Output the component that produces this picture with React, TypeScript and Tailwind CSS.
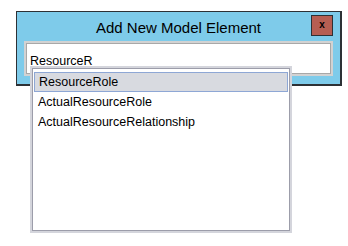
const items = ["ResourceRole", "ActualResourceRole", "ActualResourceRelationship"];

export default function App() {
  return (
    <div className="relative h-[246px] w-[348px] bg-white pl-[16px] pt-[11px] font-['Liberation_Sans',Arial,sans-serif] text-black">
      <div className="h-[75px] w-[326px] border border-r-2 border-b-2 border-[#2d3135] bg-[#7ecbea]">
        <div className="relative flex h-[29px] items-center justify-center pt-[1px]">
          <span className="text-[15px] leading-none">Add New Model Element</span>
          <button className="absolute right-[7px] top-[3px] flex h-[21px] w-[22px] items-center justify-center border border-[#2d3135] bg-[#b65e52] pb-[2px] text-[10px] font-bold leading-none">
            x
          </button>
        </div>
        <div className="ml-[7px] h-[35px] w-[309px] border-2 border-[#d2d2d2] bg-white">
          <div className="flex h-full items-end border border-[#a8a8a8] pb-[6px] pl-[3px]">
            <span className="text-[12.5px] leading-none">ResourceR</span>
          </div>
        </div>
      </div>

      <div className="absolute left-[30px] top-[66px] h-[167px] w-[262px] border-2 border-[#d4d5dc] bg-white">
        <div className="h-full border border-[#9c9daa] px-[1px] pt-[3px]">
          {items.map((item, i) => (
            <div
              key={item}
              className={`flex h-[20px] items-center pl-[4px] text-[12.5px] leading-none ${
                i === 0 ? "border border-[#8ea7d5] bg-[#d8dae0] pl-[3px]" : ""
              }`}
            >
              {item}
            </div>
          ))}
        </div>
      </div>
    </div>
  );
}
